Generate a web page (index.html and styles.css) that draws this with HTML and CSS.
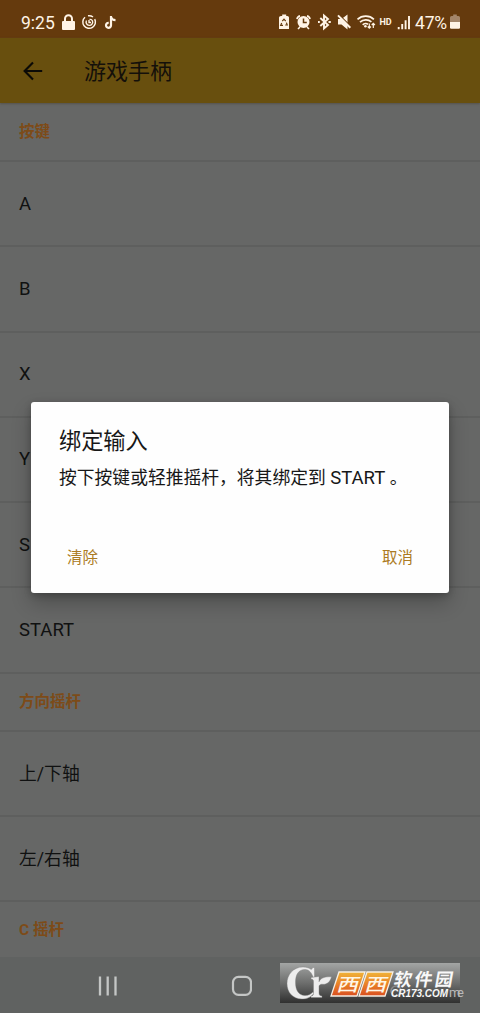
FILE: index.html
```html
<!DOCTYPE html>
<html lang="zh-CN">
<head>
<meta charset="utf-8">
<title>游戏手柄</title>
<link rel="stylesheet" href="styles.css">
</head>
<body>
<div class="screen">
  <header class="status">
    <span class="clock">9:25</span>
    <svg class="status-left" width="58" height="20" viewBox="60 12 58 20" fill="none" stroke="#fff4e6">
      <rect x="61" y="21" width="13" height="9" rx="1" fill="#fff4e6" stroke="none"/>
      <path d="M64 22v-3.2a3.5 3.5 0 0 1 7 0V22" stroke-width="2"/>
      <path d="M84 17.300a6.300 6.300 0 1 0 9.700 1.800M92 17a6.300 6.300 0 0 0-5-1.200" stroke-width="1.500"/>
      <path d="M85.500 20.500a3.300 3.300 0 1 0 6 .5c-.5-1.200-1.500-1.800-3-1.600M88 20v2.500h2" stroke-width="1.400"/>
      <path d="M110 16v9.300a2.500 2.500 0 1 1-2.300-2.500M110 17c.5 2 2 3.200 4.500 3.200" stroke-width="2.200"/>
    </svg>
    <svg class="status-right" width="136" height="20" viewBox="277 12 136 20" fill="none" stroke="#fff4e6">
      <path d="M281 16h1.200v-1.500h4V16h1.200q1.600 0 1.600 1.600V29h-10V17.600Q279 16 281 16z" fill="#fff4e6" stroke="none"/>
      <path d="M282.300 21.200l1.700-2 1.700 2M286.400 22.600l.8 2.400h-2M283 25.300h-2.300l1-2.300" stroke="#653a0d" stroke-width="1.200"/>
      <circle cx="303.500" cy="22" r="6" fill="#fff4e6" stroke="none"/>
      <path d="M303.500 18.500V22.500h3.300" stroke="#653a0d" stroke-width="1.500"/>
      <path d="M297 19.200c.2-1.700 1.300-2.900 3-3.300M307 15.900c1.700.4 2.800 1.600 3 3.300M300 27l-2 2M307 27l2 2" stroke-width="1.600"/>
      <path d="M320.300 18l7.700 7-4 3.500v-13l4 3.500-7.700 7M318 22h1.800M328.500 22h2.300" stroke-width="1.900"/>
      <path d="M338 19h3.500l6-4.500v15l-6-5H338z" fill="#fff4e6" stroke="none"/>
      <path d="M338.800 14.500l12.500 12.500" stroke="#653a0d" stroke-width="1.300"/>
      <path d="M338 15.400l12.300 12.300" stroke-width="2"/>
      <path d="M357.500 19.300c4.600-4.300 12-4.300 16.400 0M360 22.200c3.300-3 8.200-3 11.400-.3M362.700 24.800c1.500-1.500 4-1.500 5.300-.4" stroke-width="1.700"/>
      <circle cx="365.400" cy="26.200" r="1.300" fill="#fff4e6" stroke="none"/>
      <path d="M369.300 23.500v4.500M367.700 26.500l1.600 1.700 1.600-1.700M373.300 28v-4.500M371.700 25l1.600-1.700 1.600 1.700" stroke-width="1.200"/>
      <text x="379.500" y="25.300" class="hd">HD</text>
      <path d="M398.700 27v2.200M402.200 24v5.200M405.600 20.200v9M409 16v13.200" stroke-width="1.900"/>
    </svg>
    <span class="percent">47%</span>
    <svg class="battery" width="10" height="16" viewBox="0 0 10 16">
      <path d="M1.500 2h1.700V.5h3.600V2h1.700Q10 2 10 3.500V9H0V3.500Q0 2 1.500 2z" fill="#a38569"/>
      <path d="M0 8h10v5.500q0 1.200-1.200 1.200H1.200Q0 14.700 0 13.500z" fill="#fff4e6"/>
    </svg>
  </header>
  <div class="appbar">
    <svg width="20" height="20" viewBox="0 0 20 20" fill="none" stroke="#0b0a06" stroke-width="2.100"><path d="M19.200 10H2M10 1.500L1.600 10l8.400 8.500"/></svg>
    <h1 class="title">游戏手柄</h1>
  </div>
  <main class="list">
    <div class="section">按键</div>
    <div class="row">A</div>
    <div class="row">B</div>
    <div class="row">X</div>
    <div class="row">Y</div>
    <div class="row">S</div>
    <div class="row">START</div>
    <div class="section">方向摇杆</div>
    <div class="row axis">上/下轴</div>
    <div class="row axis">左/右轴</div>
    <div class="section">C 摇杆</div>
  </main>
  <nav class="navbar">
    <svg width="154" height="22" viewBox="98 0 154 22" fill="none" stroke="#c4c6c5">
      <path d="M100 1.500v19M107.700 1.500v19M115.500 1.500v19" stroke-width="2.300"/>
      <rect x="233" y="1.800" width="18" height="18" rx="5.500" stroke-width="2.200"/>
    </svg>
  </nav>

  <section class="dialog">
    <h2 class="dialog-title">绑定输入</h2>
    <p class="dialog-text">按下按键或轻推摇杆，将其绑定到 <span class="key">START</span> 。</p>
    <div class="actions"><span>清除</span><span>取消</span></div>
  </section>

  <svg class="watermark" width="190" height="40" viewBox="0 0 190 40">
    <defs>
      <linearGradient id="plate" x1="0" y1="0" x2="0" y2="1"><stop offset="0" stop-color="#a3a5a4"/><stop offset=".5" stop-color="#6d6e6d"/><stop offset="1" stop-color="#303030"/></linearGradient>
      <linearGradient id="orange" x1="0" y1="0" x2="0" y2="1"><stop offset="0" stop-color="#f0b43a"/><stop offset=".5" stop-color="#e98227"/><stop offset="1" stop-color="#d94e20"/></linearGradient>
    </defs>
    <rect width="180" height="40" fill="url(#plate)"/>
    <circle cx="116" cy="28" r="5" fill="none" stroke="#8b8b8b" stroke-width="1.500"/>
    <text x="169" y="34" class="handle" textLength="15">me</text>
    <g class="mark">
      <path d="M34.500 4.500v10h-1.200C31.500 9.500 29 6.500 25 6.500c-6.500 0-9.500 5-9.500 13s3.500 13 9.500 13c4 0 6-1.600 8-3.500l1 1.200c-2.600 3.600-6.500 5.800-12 5.800C12.500 36 7 29 7 20.500S13 4 23 4c4 0 6.500 1.200 8.300 2.500L33 4.500z"/>
      <path d="M31 14.500l8-1v5.300c1.500-3.500 5-5.300 12.500-5-1.500 5.500-4.500 7.500-8 7.500-1.800 0-2.800-.5-4.500 1.500V30c0 2 .8 2.700 3 3v1.500H31V33c2-.3 2.500-1 2.500-3V18.500c0-1.600-.6-2.200-2.500-2.500z"/>
    </g>
    <path d="M59 9h26l-8 24H51zM87 9h26l-8 24H79z" fill="url(#orange)" stroke="#f5eee4" stroke-width="1.300"/>
    <text class="xi" transform="translate(56 27.500) skewX(-16) scale(1.220 1)">西</text>
    <text class="xi" transform="translate(84 27.500) skewX(-16) scale(1.220 1)">西</text>
    <text class="site-cn" transform="translate(113 22.500) skewX(-10)" textLength="59">软件园</text>
    <text class="site-url" x="111" y="34" textLength="57" lengthAdjust="spacingAndGlyphs">CR173.COM</text>
  </svg>
</div>
</body>
</html>
```
FILE: styles.css
```css
* { box-sizing: border-box; }
body { margin: 0; font-family: Roboto, "Noto Sans CJK SC", sans-serif; }
.screen { position: relative; width: 480px; height: 1013px; overflow: hidden; background: #666766; color: #101111; display: flex; flex-direction: column; }
.status { height: 38px; flex: none; background: #653a0d; color: #fff4e6; display: flex; align-items: center; padding: 7px 20px 0 21px; }
.clock { width: 40px; font-size: 17.5px; line-height: 20px; }
.status-left { margin-top: -1px; }
.status-right { margin: -1px 0 0 158px; }
.percent { margin-left: 2px; width: 35px; font-size: 17.5px; line-height: 20px; white-space: nowrap; letter-spacing: -0.2px; }
.battery { flex: none; margin-top: -2px; }
.hd { font: 700 9px Roboto, sans-serif; fill: #fff4e6; stroke: none; }
.appbar { height: 65px; flex: none; background: #684f0e; display: flex; align-items: center; gap: 41px; padding-left: 23px; box-shadow: 0 1px 2px #55524b; z-index: 1; }
.title { margin: 2px 0 0; font-size: 22px; line-height: 30px; font-weight: 400; color: #14100a; }
.list { flex: none; height: 854px; overflow: hidden; padding-top: 1px; }
.row, .section { display: flex; align-items: center; padding-left: 19px; border-bottom: 2px solid #5e5f5e; }
.row { height: 85.250px; font-size: 18.500px; }
.axis { font-size: 17.800px; padding-bottom: 3px; }
.section { height: 58px; padding-bottom: 4px; font-size: 15.500px; font-weight: 700; color: #7d4b18; }
.navbar { flex: 1; background: #606261; display: flex; align-items: flex-start; padding: 18px 0 0 98px; }
.dialog { position: absolute; left: 31px; top: 402px; width: 418px; height: 191px; padding: 24px 28px 0; background: #fefefe; border-radius: 3px; box-shadow: 0 10px 20px rgba(0,0,0,.24), 0 2px 7px rgba(0,0,0,.22); color: #171717; }
.dialog-title { margin: 0; font-size: 22.200px; line-height: 30px; font-weight: 400; }
.dialog-text { margin: 9px 0 0; font-size: 17.800px; line-height: 26px; white-space: nowrap; }
.key { font-size: 18.500px; }
.actions { display: flex; justify-content: space-between; margin-top: 55px; padding: 0 8px; font-size: 15.500px; line-height: 24px; color: #ab7b23; }
.watermark { position: absolute; left: 280px; top: 963px; }
.handle { font: 13px Roboto, sans-serif; fill: #b9b9b9; }
.mark { fill: #ededed; stroke: #7b7b7b; stroke-width: .4px; }
.xi { font: 500 18px "Noto Sans CJK SC", sans-serif; fill: #fff6e6; }
.site-cn { font: 700 18px "Noto Sans CJK SC", sans-serif; fill: #f8f8f8; }
.site-url { font: italic 700 10.500px "Liberation Sans", sans-serif; fill: #f8f8f8; }
```
